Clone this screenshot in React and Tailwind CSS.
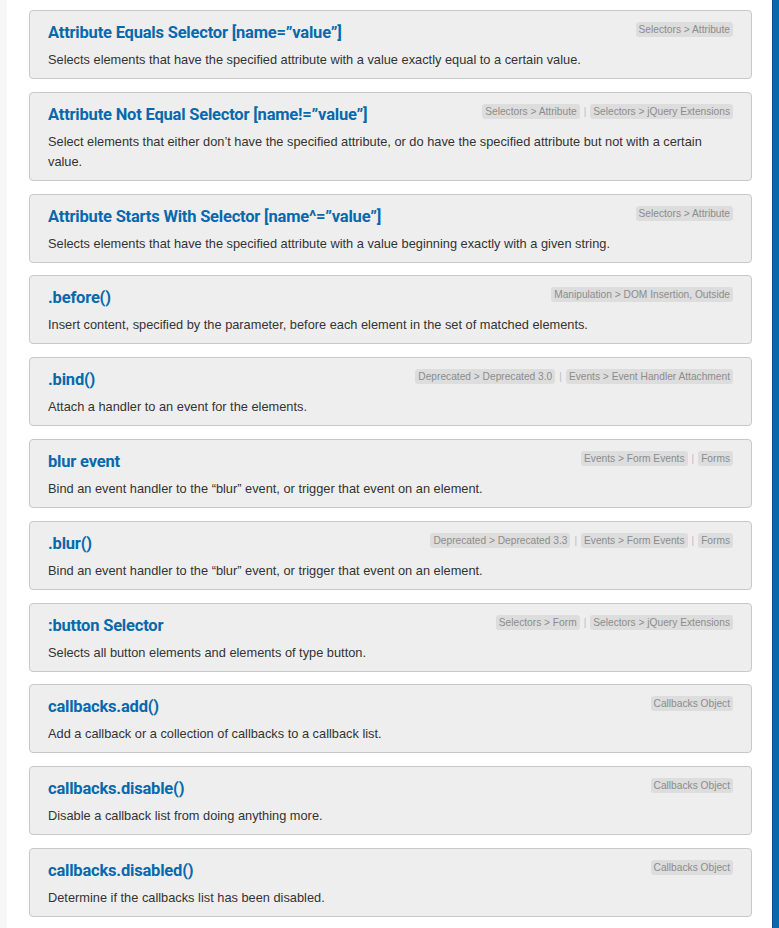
import React from 'react';

const entries = [
    { title: 'Attribute Equals Selector [name=”value”]', desc: 'Selects elements that have the specified attribute with a value exactly equal to a certain value.', tags: ['Selectors > Attribute'] },
    { title: 'Attribute Not Equal Selector [name!=”value”]', desc: 'Select elements that either don’t have the specified attribute, or do have the specified attribute but not with a certain value.', tags: ['Selectors > Attribute', 'Selectors > jQuery Extensions'] },
    { title: 'Attribute Starts With Selector [name^=”value”]', desc: 'Selects elements that have the specified attribute with a value beginning exactly with a given string.', tags: ['Selectors > Attribute'] },
    { title: '.before()', desc: 'Insert content, specified by the parameter, before each element in the set of matched elements.', tags: ['Manipulation > DOM Insertion, Outside'] },
    { title: '.bind()', desc: 'Attach a handler to an event for the elements.', tags: ['Deprecated > Deprecated 3.0', 'Events > Event Handler Attachment'] },
    { title: 'blur event', desc: 'Bind an event handler to the “blur” event, or trigger that event on an element.', tags: ['Events > Form Events', 'Forms'] },
    { title: '.blur()', desc: 'Bind an event handler to the “blur” event, or trigger that event on an element.', tags: ['Deprecated > Deprecated 3.3', 'Events > Form Events', 'Forms'] },
    { title: ':button Selector', desc: 'Selects all button elements and elements of type button.', tags: ['Selectors > Form', 'Selectors > jQuery Extensions'] },
    { title: 'callbacks.add()', desc: 'Add a callback or a collection of callbacks to a callback list.', tags: ['Callbacks Object'] },
    { title: 'callbacks.disable()', desc: 'Disable a callback list from doing anything more.', tags: ['Callbacks Object'] },
    { title: 'callbacks.disabled()', desc: 'Determine if the callbacks list has been disabled.', tags: ['Callbacks Object'] },
];

const Entry = ({ entry }) => (
    <div className="bg-[#eeeeee] border border-[#c8c8c8] rounded-[4px] pl-[18px] pr-[18px] pt-[11px] pb-[8px] mb-[12.8px]">
        <div className="flex items-start justify-between">
            <h2 className="text-[16.5px] leading-[22px] font-bold text-[#0769ad] tracking-[-0.2px] mt-0" style={{ fontFamily: 'Roboto, "Noto Sans", sans-serif' }}>
                {entry.title}
            </h2>
            <div className="flex items-center shrink-0 ml-4">
                {entry.tags.map((tag, i) => (
                    <React.Fragment key={tag}>
                        {i > 0 && <span className="text-[10px] text-[#bbbbbb] mx-[4px]">|</span>}
                        <span className="bg-[#dddddd] text-[#8c8c8c] text-[10.2px] leading-[15px] px-[3px] rounded-[3px]">{tag}</span>
                    </React.Fragment>
                ))}
            </div>
        </div>
        <p className="mt-[6px] text-[12.8px] leading-[20px] text-[#333333]">{entry.desc}</p>
    </div>
);

const App = () => {
    return (
        <div className="flex min-h-[928px] bg-white" style={{ fontFamily: '"Liberation Sans", Arial, sans-serif' }}>
            <div className="w-[7px] bg-[#f7f7f7] shrink-0"></div>
            <div className="flex-1 pl-[22px] pr-[20px] pt-[10px]">
                {entries.map(entry => <Entry key={entry.title} entry={entry} />)}
            </div>
            <div className="w-[7px] bg-[#0769ad] border-l border-[#0a4f86] shrink-0"></div>
        </div>
    );
};

export default App;
